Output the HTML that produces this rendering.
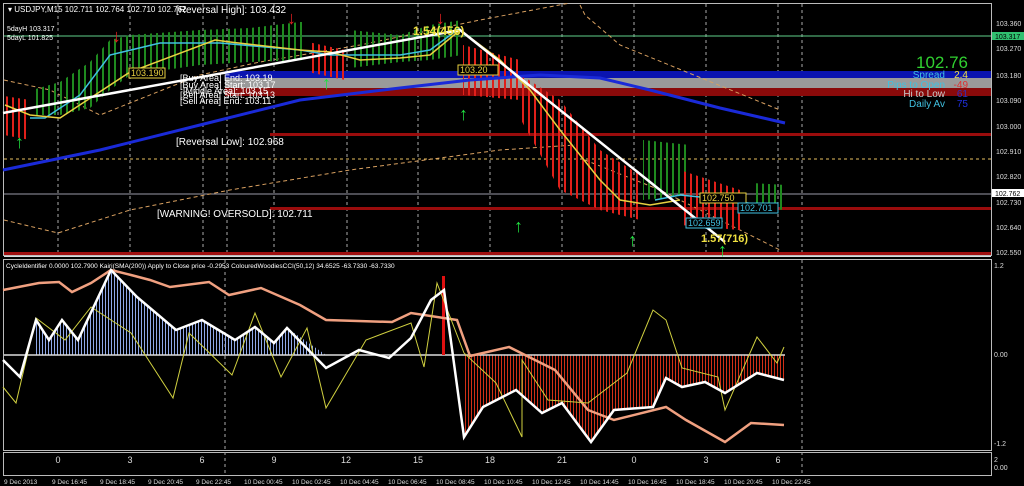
<!DOCTYPE html>
<html><head><meta charset="utf-8"><style>
html,body{margin:0;padding:0;background:#000;width:1024px;height:486px;overflow:hidden}
svg{display:block}
text{font-family:"Liberation Sans",sans-serif}
</style></head><body>
<svg width="1024" height="486" viewBox="0 0 1024 486" xmlns="http://www.w3.org/2000/svg">
<defs>
<pattern id="pg" width="6" height="10" patternUnits="userSpaceOnUse"><rect x="0" y="0" width="2" height="10" fill="#1f8a1f"/></pattern>
<pattern id="pr" width="6" height="10" patternUnits="userSpaceOnUse"><rect x="0" y="0" width="2" height="10" fill="#e0201a"/></pattern>
<pattern id="pb" width="3" height="10" patternUnits="userSpaceOnUse"><rect x="0" y="0" width="1" height="10" fill="#8fa8e8"/></pattern>
<pattern id="prr" width="3" height="10" patternUnits="userSpaceOnUse"><rect x="0" y="0" width="1" height="10" fill="#d03018"/></pattern>
</defs>
<rect width="1024" height="486" fill="#000"/>
<rect x="3.5" y="3.5" width="988" height="252" fill="none" stroke="#bbb" stroke-width="1"/>
<g stroke="#aaa" stroke-width="1" stroke-dasharray="3,3">
<path d="M58 4V255M130 4V255M203 4V255M227 4V255M274 4V255M347 4V255M418 4V255M490 4V255M562 4V255M634 4V255M706 4V255M778 4V255M802 4V255"/>
</g>
<line x1="4" y1="36" x2="991" y2="36" stroke="#5fd08a" stroke-width="1"/>
<rect x="225" y="71" width="766" height="7" fill="#0a14b0"/>
<rect x="225" y="78" width="766" height="10" fill="#9a9a9a"/>
<rect x="225" y="88" width="766" height="8" fill="#8a0a0a"/>
<rect x="270" y="133" width="721" height="3" fill="#9a0c0c"/>
<rect x="270" y="207" width="721" height="3" fill="#9a0c0c"/>
<line x1="4" y1="159" x2="991" y2="159" stroke="#e8c060" stroke-dasharray="3,3"/>
<line x1="4" y1="194" x2="991" y2="194" stroke="#9a9aa8"/>
<rect x="4" y="252" width="987" height="3" fill="#a01010"/>
<line x1="4" y1="256.5" x2="991" y2="256.5" stroke="#ddd"/>
<g fill="none" stroke="#d8a060" stroke-width="1" stroke-dasharray="4,3">
<polyline points="4,80 50,90 100,115 200,75 260,62 360,45 480,20 570,3"/>
<polyline points="4,220 58,233 130,210 230,190 350,170 500,150 575,145"/>
<polyline points="580,5 585,15 620,45 780,110"/>
<polyline points="585,160 660,190 780,250"/>
</g>
<polygon points="4,96 30,100 30,140 4,135" fill="url(#pr)"/>
<polygon points="32,90 60,82 90,62 110,40 130,35 200,30 250,28 300,22 306,22 306,60 250,62 200,65 130,75 110,90 90,108 60,115 32,115" fill="url(#pg)"/>
<polygon points="308,42 345,50 345,80 308,72" fill="url(#pr)"/>
<polygon points="350,30 400,35 430,25 462,20 462,55 430,60 400,62 350,68" fill="url(#pg)"/>
<polygon points="463,45 520,60 520,100 463,95" fill="url(#pr)"/>
<polygon points="521,75 560,100 600,150 640,175 640,220 600,210 560,190 521,120" fill="url(#pr)"/>
<polygon points="643,140 690,145 690,195 643,200" fill="url(#pg)"/>
<polygon points="680,170 740,190 740,230 680,225" fill="url(#pr)"/>
<polygon points="752,183 786,185 786,210 752,208" fill="url(#pg)"/>
<polyline points="3,170 100,150 200,125 300,100 400,88 470,80 540,75 600,78 650,90 720,108 785,123" fill="none" stroke="#1a2ad8" stroke-width="3"/>
<polyline points="30,118 45,118 80,95 110,55 160,43 220,43 300,50 330,55 400,55 430,50 460,28" fill="none" stroke="#40c0e0" stroke-width="1.5"/>
<polyline points="655,200 680,195 710,198 778,207" fill="none" stroke="#40c0e0" stroke-width="1.5"/>
<polyline points="5,105 30,115 60,118 130,72 215,40 230,42 300,50 330,52 360,60 400,58 430,55 460,30 500,60 530,90 560,130 600,180 620,200 650,205 680,200" fill="none" stroke="#e8d040" stroke-width="1.5"/>
<polyline points="3,113 460,30 725,242" fill="none" stroke="#fff" stroke-width="2.5"/>
<g fill="#20e040" font-size="18" font-weight="bold">
<text x="15" y="148">↑</text><text x="322" y="89">↑</text><text x="459" y="120">↑</text><text x="514" y="232">↑</text><text x="628" y="246">↑</text><text x="718" y="256">↑</text>
</g>
<g fill="#e02020" font-size="18" font-weight="bold"><text x="112" y="42">↓</text><text x="287" y="24">↓</text><text x="436" y="24">↓</text></g>
<g font-size="10" fill="#fff">
<text x="8" y="12" font-size="8">▾ USDJPY,M15  102.711 102.764 102.710 102.762</text>
<text x="176" y="13">[Reversal High]: 103.432</text>
<text x="7" y="31" font-size="7">5dayH 103.317</text>
<text x="7" y="40" font-size="7">5dayL 101.825</text>
<text x="180" y="81" font-size="9">[Buy Area] End: 103.19</text>
<text x="180" y="88" font-size="9">[Buy Area] Start: 103.17</text>
<text x="183" y="94" font-size="9">[Middle Area]: 103.15</text>
<text x="180" y="98" font-size="9">[Sell Area] Start: 103.13</text>
<text x="180" y="104" font-size="9">[Sell Area] End: 103.11</text>
<text x="176" y="145">[Reversal Low]: 102.968</text>
<text x="157" y="217">[WARNING! OVERSOLD]: 102.711</text>
</g>
<rect x="129" y="68" width="36" height="10" fill="#000" stroke="#e8d040"/>
<text x="131" y="76" font-size="9" fill="#e8d040">103.190</text>
<text x="413" y="35" font-size="12" font-weight="bold" fill="#f0e040">1.54(456)</text>
<text x="701" y="242" font-size="11" font-weight="bold" fill="#f0e040">1.57(716)</text>
<rect x="458" y="65" width="40" height="10" fill="#000" stroke="#e8d040"/><text x="460" y="73" font-size="9" fill="#e8d040">103.20</text>
<rect x="686" y="218" width="36" height="10" fill="#000" stroke="#40c0e0"/><text x="688" y="226" font-size="9" fill="#40c0e0">102.659</text>
<rect x="700" y="193" width="46" height="10" fill="#000" stroke="#e8d040"/><text x="702" y="201" font-size="9" fill="#e8d040">102.750</text>
<rect x="738" y="203" width="40" height="10" fill="#000" stroke="#40c0e0"/><text x="740" y="211" font-size="9" fill="#40c0e0">102.701</text>
<text x="968" y="68" font-size="17" fill="#30d030" text-anchor="end">102.76</text>
<g font-size="10" text-anchor="end">
<text x="945" y="78" fill="#40c0e0">Spread</text><text x="968" y="78" fill="#f0e040">2.4</text>
<text x="945" y="88" fill="#40c0e0">Pips to Open</text><text x="968" y="88" fill="#e03030">-49</text>
<text x="945" y="97" fill="#ccc">Hi to Low</text><text x="968" y="97" fill="#3030c0">61</text>
<text x="945" y="107" fill="#40c0e0">Daily Av</text><text x="968" y="107" fill="#2030e0">75</text>
</g>
<g font-size="7" fill="#ddd">
<text x="996" y="26">103.360</text><text x="996" y="51">103.270</text><text x="996" y="78">103.180</text><text x="996" y="103">103.090</text><text x="996" y="129">103.000</text><text x="996" y="154">102.910</text><text x="996" y="179">102.820</text><text x="996" y="205">102.730</text><text x="996" y="230">102.640</text><text x="996" y="255">102.550</text>
</g>
<rect x="992" y="32" width="32" height="8" fill="#30c070"/><text x="995" y="39" font-size="7" fill="#000">103.317</text>
<rect x="992" y="189" width="32" height="8" fill="#fff"/><text x="995" y="196" font-size="7" fill="#000">102.762</text>
<rect x="3.5" y="259.5" width="988" height="191" fill="none" stroke="#bbb"/>
<g stroke="#aaa" stroke-dasharray="3,3"><path d="M225 260V451M802 260V451"/></g>
<text x="6" y="268" font-size="6.5" fill="#fff">CycleIdentifier 0.0000 102.7900  Kairi(SMA(200)) Apply to Close price -0.2953  ColouredWoodiesCCI(50,12) 34.6525 -63.7330 -63.7330</text>
<polygon points="36,320 49,340 62,320 78,340 111,270 137,297 176,330 202,320 235,340 255,327 274,343 287,328 326,355 36,355" fill="url(#pb)"/>
<polygon points="464,355 464,437 483,407 516,390 542,413 562,403 591,442 614,410 653,407 666,378 682,387 705,382 725,393 757,373 784,380 784,355" fill="url(#prr)"/>
<line x1="4" y1="355" x2="785" y2="355" stroke="#ddd" stroke-width="1.5"/>
<rect x="442" y="276" width="3" height="79" fill="#e01010"/>
<polyline points="3,290 39,283 59,282 72,292 91,283 111,270 131,275 150,280 170,287 209,282 229,295 261,288 300,305 326,320 392,322 411,313 457,320 470,356 509,347 555,370 588,410 614,420 666,407 686,420 725,442 751,423 784,425" fill="none" stroke="#f0a080" stroke-width="2.5"/>
<polyline points="3,387 16,403 36,318 65,340 91,307 131,333 173,398 189,333 232,375 255,313 281,377 307,328 326,408 366,340 411,323 424,367 437,283 464,353 496,383 522,437 522,360 548,400 588,403 627,373 653,310 666,320 682,368 718,377 725,410 757,337 777,363 784,347" fill="none" stroke="#d0d040" stroke-width="1"/>
<polyline points="3,360 20,377 36,320 49,340 62,320 78,340 111,270 137,297 176,330 202,320 235,340 255,327 274,343 287,328 326,368 359,350 389,358 411,338 431,300 444,290 464,437 483,407 516,390 542,413 562,403 591,442 614,410 653,407 666,378 682,387 705,382 725,393 757,373 784,380" fill="none" stroke="#fff" stroke-width="2.5"/>
<g font-size="7" fill="#ddd"><text x="994" y="268">1.2</text><text x="994" y="357">0.00</text><text x="994" y="446">-1.2</text></g>
<rect x="3.5" y="452.5" width="988" height="23" fill="none" stroke="#bbb"/>
<g font-size="9" fill="#ddd" text-anchor="middle">
<text x="58" y="463">0</text><text x="130" y="463">3</text><text x="202" y="463">6</text><text x="274" y="463">9</text><text x="346" y="463">12</text><text x="418" y="463">15</text><text x="490" y="463">18</text><text x="562" y="463">21</text><text x="634" y="463">0</text><text x="706" y="463">3</text><text x="778" y="463">6</text>
</g>
<g stroke="#aaa" stroke-dasharray="3,3"><path d="M225 452V476M802 452V476"/></g>
<g font-size="7" fill="#ddd"><text x="994" y="462">2</text><text x="994" y="470">0.00</text></g>
<g font-size="6.5" fill="#ddd">
<text x="4" y="484">9 Dec 2013</text><text x="52" y="484">9 Dec 16:45</text><text x="100" y="484">9 Dec 18:45</text><text x="148" y="484">9 Dec 20:45</text><text x="196" y="484">9 Dec 22:45</text><text x="244" y="484">10 Dec 00:45</text><text x="292" y="484">10 Dec 02:45</text><text x="340" y="484">10 Dec 04:45</text><text x="388" y="484">10 Dec 06:45</text><text x="436" y="484">10 Dec 08:45</text><text x="484" y="484">10 Dec 10:45</text><text x="532" y="484">10 Dec 12:45</text><text x="580" y="484">10 Dec 14:45</text><text x="628" y="484">10 Dec 16:45</text><text x="676" y="484">10 Dec 18:45</text><text x="724" y="484">10 Dec 20:45</text><text x="772" y="484">10 Dec 22:45</text>
</g>
</svg>
</body></html>
